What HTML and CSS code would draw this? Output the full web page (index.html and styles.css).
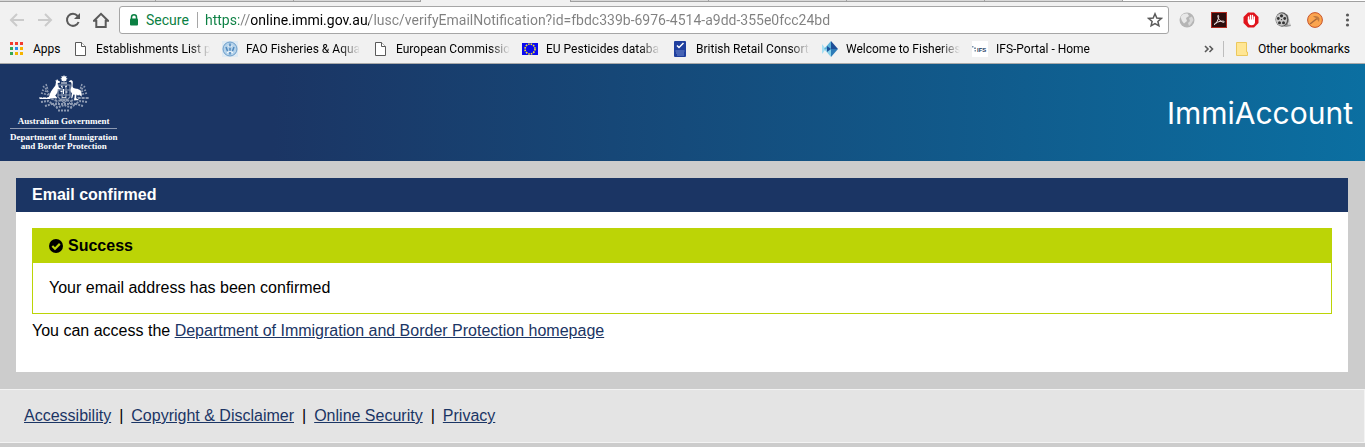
FILE: index.html
```
<!DOCTYPE html>
<html lang="en">
<head>
    <meta charset="UTF-8">
    <meta name="viewport" content="width=device-width, initial-scale=1.0">
    <title>ImmiAccount</title>
    <link rel="stylesheet" href="styles.css">
</head>
<body>
    <div class="browser">
        <div class="tab-strip">
            <span class="tab first"></span>
            <span class="tab"></span>
            <span class="tab short"></span>
            <span class="tab active"></span>
            <span class="tab"></span>
            <span class="tab"></span>
            <span class="tab"></span>
            <span class="tab"></span>
            <span class="strip-end"></span>
        </div>

        <div class="toolbar">
            <button class="icon-button" aria-label="Back" disabled>
                <svg viewBox="0 0 16 16" fill="none" stroke="#cbcbcb" stroke-width="2"><path d="M15 8H2.500M8 2L2 8l6 6"/></svg>
            </button>
            <button class="icon-button" aria-label="Forward" disabled>
                <svg viewBox="0 0 16 16" fill="none" stroke="#cbcbcb" stroke-width="2"><path d="M1 8h12.500M8 2l6 6-6 6"/></svg>
            </button>
            <button class="icon-button" aria-label="Reload">
                <svg viewBox="0 0 16 16" fill="none" stroke="#5a5a5a" stroke-width="2"><path d="M13.600 10A6 6 0 1 1 12.600 4"/><path d="M15 1v6H9z" fill="#5a5a5a" stroke="none"/></svg>
            </button>
            <button class="icon-button" aria-label="Home">
                <svg viewBox="0 0 16 16" fill="none" stroke="#5a5a5a" stroke-width="2"><path d="M1 8.700L8 1.800l7 6.900H12.700V15H3.300V8.700z"/></svg>
            </button>

            <div class="address">
                <svg class="lock" viewBox="0 0 10 12"><path d="M2.500 5V3.300a2.500 2.500 0 0 1 5 0V5" fill="none" stroke="#0b8043" stroke-width="1.500"/><rect x="1" y="4.500" width="8" height="7" rx="1" fill="#0b8043"/></svg>
                <label class="secure" for="url">Secure</label>
                <input class="url" id="url" type="text" spellcheck="false" value="https://online.immi.gov.au/lusc/verifyEmailNotification?id=fbdc339b-6976-4514-a9dd-355e0fcc24bd">
                <button class="icon-button" aria-label="Bookmark this page">
                    <svg viewBox="0 0 16 16" fill="none" stroke="#5a5a5a" stroke-width="1.500"><path d="M8 1.800l1.800 4.200 4.500.4-3.400 3 1 4.400L8 11.500l-3.900 2.300 1-4.400-3.400-3 4.500-.4z"/></svg>
                </button>
            </div>

            <div class="extensions">
                <button class="icon-button" aria-label="Globe">
                    <svg viewBox="0 0 16 16"><circle cx="8" cy="8" r="7.500" fill="#b5b5b5"/><path d="M1.500 5C3 2 6 1 8.500 1.500L10 4 7 6l1 3-3 2.500L3 9z" fill="#e8e8e8"/><path d="M10 6l3-1.500L14.500 8 12 12l-2 2-1-3 2-2z" fill="#d8d8d8"/></svg>
                </button>
                <button class="icon-button" aria-label="PDF">
                    <svg viewBox="0 0 16 16"><rect x=".5" y=".5" width="15" height="15" fill="#2c0c0c" stroke="#b12a20"/><path d="M3 12.500c1.500.6 4-4 4.600-7C8 3.500 7 2.500 6.800 3.800 6.500 6 9.500 10 12.500 10.300c1.500 0 1-1.300-1-1.200-3 0-7 1.500-8.500 3.400z" fill="none" stroke="#f4e9e9"/></svg>
                </button>
                <button class="icon-button" aria-label="Ad blocker">
                    <svg viewBox="0 0 16 16"><path d="M5 .5h6L15.500 5v6L11 15.500H5L.5 11V5z" fill="#e0141c"/><path d="M5.500 5v4M7.500 3.500V9M9.500 3.500V9M11.300 5v5" stroke="#fff" stroke-width="1.400" stroke-linecap="round"/><path d="M4.800 7.500H12V10c0 2-1.300 3.300-3.500 3.300S5.500 12 4.800 10z" fill="#fff"/></svg>
                </button>
                <button class="icon-button" aria-label="Video">
                    <svg viewBox="0 0 16 16"><path d="M8 1l5 2 1.500 7 1.500 4-5 1-4-1z" fill="#999"/><path d="M11 5l3 8M13 4l2 9" stroke="#ddd"/><ellipse cx="7" cy="7.500" rx="6.500" ry="7.200" fill="#555"/><ellipse cx="6.500" cy="7.500" rx="5.600" ry="6.300" fill="#c8c8c8"/><g fill="#333"><circle cx="6.500" cy="3.800" r="1.600"/><circle cx="3.300" cy="6.500" r="1.400"/><circle cx="9.700" cy="6.500" r="1.400"/><circle cx="4.500" cy="10.700" r="1.500"/><circle cx="8.500" cy="10.700" r="1.500"/><circle cx="6.500" cy="7.600" r=".7"/></g></svg>
                </button>
                <button class="icon-button" aria-label="Tools">
                    <svg viewBox="0 0 16 16"><circle cx="8" cy="8" r="7.400" fill="#fba54f" stroke="#c9542a"/><path d="M3 12l7-5.500" stroke="#a8683a" stroke-width="1.500"/><path d="M6 4.500c2.500-1 5-.5 6.500 2l-.5 3.500-2.500-3.500z" fill="#c07a40"/></svg>
                </button>
                <button class="icon-button" aria-label="Menu">
                    <svg viewBox="0 0 16 16" fill="#5a5a5a"><circle cx="8.500" cy="3" r="1.600"/><circle cx="8.500" cy="8" r="1.600"/><circle cx="8.500" cy="13" r="1.600"/></svg>
                </button>
            </div>
        </div>

        <nav class="bookmarks">
            <a class="apps" href="#">
                <svg viewBox="0 0 16 16"><path d="M0 1h3v3H0zM5 1h3v3H5zM10 1h3v3h-3z" fill="#f33b30"/><path d="M0 6h3v3H0zM0 11h3v3H0z" fill="#34a853"/><path d="M5 6h3v3H5z" fill="#2b8cf0"/><path d="M5 11h3v3H5zM10 6h3v3h-3zM10 11h3v3h-3z" fill="#f5b400"/></svg>
                <span>Apps</span>
            </a>
            <a class="bookmark" href="#">
                <svg viewBox="0 0 16 16" fill="#fff" stroke="#5a5a5a"><path d="M3.500 1.500h6l4 4v9h-10z"/><path d="M9.500 1.500v4h4"/></svg>
                <span>Establishments List per</span>
            </a>
            <a class="bookmark" href="#">
                <svg viewBox="0 0 16 16"><rect width="16" height="16" fill="#dfeaf3"/><circle cx="8" cy="8" r="7" fill="#b4d2ea" stroke="#6b9dca"/><path d="M8 2.500v11M4 6l1.500 4M12 6l-1.500 4" stroke="#4f88bd" stroke-width="1.500"/><path d="M6 4.500l2 2 2-2M5 12l3-2 3 2" fill="none" stroke="#fff"/></svg>
                <span>FAO Fisheries &amp; Aquac</span>
            </a>
            <a class="bookmark" href="#">
                <svg viewBox="0 0 16 16" fill="#fff" stroke="#5a5a5a"><path d="M3.500 1.500h6l4 4v9h-10z"/><path d="M9.500 1.500v4h4"/></svg>
                <span>European Commission</span>
            </a>
            <a class="bookmark" href="#">
                <svg viewBox="0 0 16 16"><rect y="2" width="16" height="12" fill="#0a0af0"/><circle cx="8" cy="8" r="5" fill="none" stroke="#f3e62b" stroke-width="1.600" stroke-dasharray="1.600 1.020"/></svg>
                <span>EU Pesticides database</span>
            </a>
            <a class="bookmark" href="#">
                <svg viewBox="0 0 16 16"><rect x="2" width="12" height="16" rx="1" fill="#1f3f9e"/><path d="M5 4.500l2 2L11.500 2" fill="none" stroke="#fff" stroke-width="1.500"/><path d="M3.500 10h9M4 12h8M5 14h7" stroke="#6e88cc"/></svg>
                <span>British Retail Consortium</span>
            </a>
            <a class="bookmark" href="#">
                <svg viewBox="0 0 16 16"><path d="M0 3l4 5-4 5z" fill="#a6dff2"/><path d="M9 0v8H2z" fill="#5bb3da"/><path d="M9 16V8H2z" fill="#86cfe8"/><path d="M9 0l7 8H9z" fill="#1d4f98"/><path d="M9 16l7-8H9z" fill="#2d7bb8"/><path d="M5 5l4 3-4 3z" fill="#1d4f98"/></svg>
                <span>Welcome to Fisheries'</span>
            </a>
            <a class="bookmark" href="#">
                <svg viewBox="0 0 16 16"><rect width="16" height="16" fill="#fff"/><path d="M0 5h1.500v1.500H0zM2 6.500h2V8H2zM2.500 9H4v1.500H2.500z" fill="#7c93ab"/><text class="ifs" x="5" y="11">IFS</text></svg>
                <span>IFS-Portal - Home</span>
            </a>
            <button class="more" aria-label="More bookmarks">
                <svg viewBox="0 0 10 10" fill="none" stroke="#5a5a5a" stroke-width="1.600"><path d="M1 2l3 3-3 3M5.500 2l3 3-3 3"/></svg>
            </button>
            <a class="other" href="#">
                <svg viewBox="0 0 16 16"><path d="M2.500 1.500h10v9.500h1v3.500h-11z" fill="#ffe694" stroke="#ecc85c"/></svg>
                <span>Other bookmarks</span>
            </a>
        </nav>
    </div>

    <header class="header">
        <div class="crest">
            <svg viewBox="0 0 52 37">
                <g fill="none" stroke="#fff" opacity=".5">
                    <path d="M5 11l4 4 3 6M8 9l2 6M4 15l6 2M3 18l8 2M47 11l-4 4-3 6M44 9l-2 6M48 15l-6 2M49 18l-8 2" stroke-width="1.500" stroke-dasharray="2 1"/>
                    <path d="M1 23h11l7 3 7-1 7 1 7-3h11" stroke-width="2" stroke-dasharray="3 1"/>
                    <path d="M3 27l7-1 5 3 6-1M49 27l-7-1-5 3-6-1M7 31l7-2 5 3M45 31l-7-2-5 3" stroke-width="2" stroke-dasharray="2 1"/>
                    <path d="M20 10h12v12l-6 6-6-6zM24 10v15M28 10v15M20 15h12M20 20h12" stroke-width="1.200"/>
                    <path d="M17 29h18M18 33l8-3 8 3M20 35.500h12" stroke-width="2" stroke-dasharray="2 1"/>
                </g>
                <path d="M26 0l.8 1.600 1.800-.5-.5 1.800 1.500.8-1.500 1 .3 1.500-1.600-.4L26 7l-.8-1.200-1.600.4.3-1.500-1.500-1 1.500-.8-.5-1.800 1.800.5z" fill="#fff"/>
                <path d="M23 8h6" stroke="#fff"/>
                <path d="M19 4l1.300 1.800 1.700.8-.2 1.200-2 .2c-.2 2 .4 3 1 4.500l2 1-.4 1-2.600-.6c0 3-.8 5-2.600 6.500l1.800 2-.2 1-5-.5c-1 .4-2 1.100-3.500 1.100H2v-1.200h7c2-.3 2.400-2 3-4 1-3.400 3.600-5.600 5.200-8 .6-1 .4-2.500.8-3.500L17.500 5l1 .5z" fill="#fff"/>
                <path d="M30.500 6.800l1.500-1.300c1.500-.5 2.700.2 2.800 1.600.2 2-.8 4 .2 5.500 1.200 1.500 5 .5 7.300 3 1.500 1.700 1.700 4 1.200 6.200l-2-2.200-1.300.9-1.700-1-.5 4 2.500.8v.9h-4.300l.5-5.500-1.300-.3-1.200 3.900h-1l.7-5c-1.500-1.500-1.700-3-1-5 .6-1.800.8-3.700.4-5.500L32.500 7z" fill="#fff"/>
                <path d="M23 11l2 1.500M27 12l2-1M22.500 16.500h2M27.500 17h2M24 22l2 1 2-1M25.500 14v5" stroke="#fff"/>
            </svg>
            <div class="gov">Australian Government</div>
            <div class="dept">Department of Immigration<br>and Border Protection</div>
        </div>
        <div class="brand">ImmiAccount</div>
    </header>

    <main class="panel">
        <h1>Email confirmed</h1>
        <div class="panel-body">
            <section class="success">
                <h2>
                    <svg viewBox="0 0 14 14"><circle cx="7" cy="7" r="7" fill="#000"/><path d="M3.300 7l2.700 2.700 4.800-4.800" fill="none" stroke="#bcd406" stroke-width="2.200"/></svg>
                    Success
                </h2>
                <p>Your email address has been confirmed</p>
            </section>
            <p class="access">You can access the <a href="#">Department of Immigration and Border Protection homepage</a></p>
        </div>
    </main>

    <footer class="footer">
        <a href="#">Accessibility</a>
        <span>|</span>
        <a href="#">Copyright &amp; Disclaimer</a>
        <span>|</span>
        <a href="#">Online Security</a>
        <span>|</span>
        <a href="#">Privacy</a>
    </footer>
</body>
</html>
```
FILE: styles.css
```
* {
    box-sizing: border-box;
}
body {
    margin: 0;
    background-color: #ccc;
    font-family: "Liberation Sans", Arial, sans-serif;
    font-size: 16px;
    line-height: 20px;
    color: #000;
}
h1, h2, p {
    margin: 0;
    font-size: 16px;
}
svg {
    display: block;
    flex: none;
}
a {
    color: #1b3564;
}

/* browser bar */
.browser {
    background: #f1f1f1;
    border-bottom: 1px solid #a9a9a9;
    font-family: Roboto, "Noto Sans", sans-serif;
}
.tab-strip {
    display: flex;
    height: 2px;
}
.tab {
    width: 138px;
    background: #d9d9d9;
    border-right: 1px solid #a0a0a0;
    border-bottom: 1px solid #a0a0a0;
}
.tab.first {
    width: 156px;
}
.tab.short {
    width: 127px;
}
.tab.active {
    width: 150px;
    background: #f1f1f1;
    border-bottom: none;
}
.strip-end {
    flex: 1;
    background: #fff;
    border-bottom: 1px solid #a0a0a0;
}
.toolbar {
    display: flex;
    align-items: center;
    gap: 12px;
    padding: 4px 10px 0 9px;
}
.icon-button {
    width: 16px;
    height: 16px;
    padding: 0;
    border: none;
    background: none;
}
.icon-button svg, .bookmarks svg {
    width: 16px;
    height: 16px;
}
.address {
    flex: 1;
    display: flex;
    align-items: center;
    height: 28px;
    padding: 0 5px 0 9px;
    margin: 0 -2px;
    background: #fff;
    border: 1px solid #a6a6a6;
    border-radius: 3px;
}
.address .lock {
    width: 10px;
    height: 12px;
    margin-right: 7px;
}
.secure {
    width: 52px;
    border-right: 1px solid #a6a6a6;
    line-height: 16px;
    font-size: 14px;
    color: #0b8043;
}
.url {
    flex: 1;
    min-width: 0;
    padding: 0;
    margin-left: 7px;
    border: none;
    outline: none;
    font: 14px/20px Roboto, "Noto Sans", sans-serif;
    /* scheme, separator, host, path */
    background: linear-gradient(to right, #0b8043 34px, #808080 34px, #808080 46px, #000 46px, #000 164px, #808080 164px);
    -webkit-background-clip: text;
    background-clip: text;
    color: transparent;
}
.extensions {
    display: flex;
    gap: 16px;
}
.bookmarks {
    display: flex;
    align-items: center;
    height: 29px;
    padding: 0 15px 0 10px;
    font-size: 12px;
}
.bookmarks a {
    display: flex;
    align-items: center;
    color: #000;
    text-decoration: none;
    white-space: nowrap;
}
.apps {
    width: 62px;
    gap: 7px;
}
.bookmark {
    width: 150px;
    gap: 8px;
    padding-right: 12px;
}
.bookmark span {
    flex: 1;
    overflow: hidden;
    -webkit-mask-image: linear-gradient(to right, #000 94px, transparent 114px);
    mask-image: linear-gradient(to right, #000 94px, transparent 114px);
}
.ifs {
    font: bold 6px "Liberation Sans", Arial, sans-serif;
    fill: #1d3a5f;
}
.more {
    margin-left: auto;
    padding: 0;
    border: none;
    background: none;
}
.bookmarks .more svg {
    width: 10px;
    height: 10px;
}
.other {
    gap: 8px;
    margin-left: 9px;
    padding-left: 10px;
    border-left: 1px solid #bdbdbd;
    line-height: 16px;
}

/* page header */
.header {
    display: flex;
    align-items: center;
    justify-content: space-between;
    height: 97px;
    padding: 0 12px 0 10px;
    background: linear-gradient(to right, #1b3564 20%, #0b6fa1);
    color: #fff;
}
.crest {
    font-family: "Liberation Serif", "Times New Roman", serif;
    font-weight: bold;
    text-align: center;
}
.crest svg {
    width: 52px;
    height: 37px;
    margin: 0 auto 4px;
}
.gov {
    padding-bottom: 2px;
    border-bottom: 1px solid #8d9ab2;
    font-size: 9px;
    line-height: 10px;
}
.dept {
    padding-top: 4px;
    font-size: 9px;
    line-height: 9px;
}
.brand {
    font-family: Inter, sans-serif;
    font-size: 30px;
    line-height: 36px;
}

/* content */
.panel {
    margin: 17px 17px 17px 16px;
    background: #fff;
}
.panel h1 {
    padding: 7px 16px;
    background: #1b3564;
    color: #fff;
}
.panel-body {
    padding: 16px 16px 31px;
}
.success {
    border: 1px solid #bcd406;
}
.success h2 {
    display: flex;
    align-items: center;
    gap: 5px;
    padding: 7px 16px;
    background: #bcd406;
}
.success h2 svg {
    width: 14px;
    height: 14px;
}
.success p {
    padding: 15px 16px;
}
.access {
    padding-top: 7px;
}

.footer {
    display: flex;
    gap: 8px;
    padding: 16px 24px;
    background: #e4e4e4;
    border: 1px solid #f3f3f3;
    border-left: none;
}
```
